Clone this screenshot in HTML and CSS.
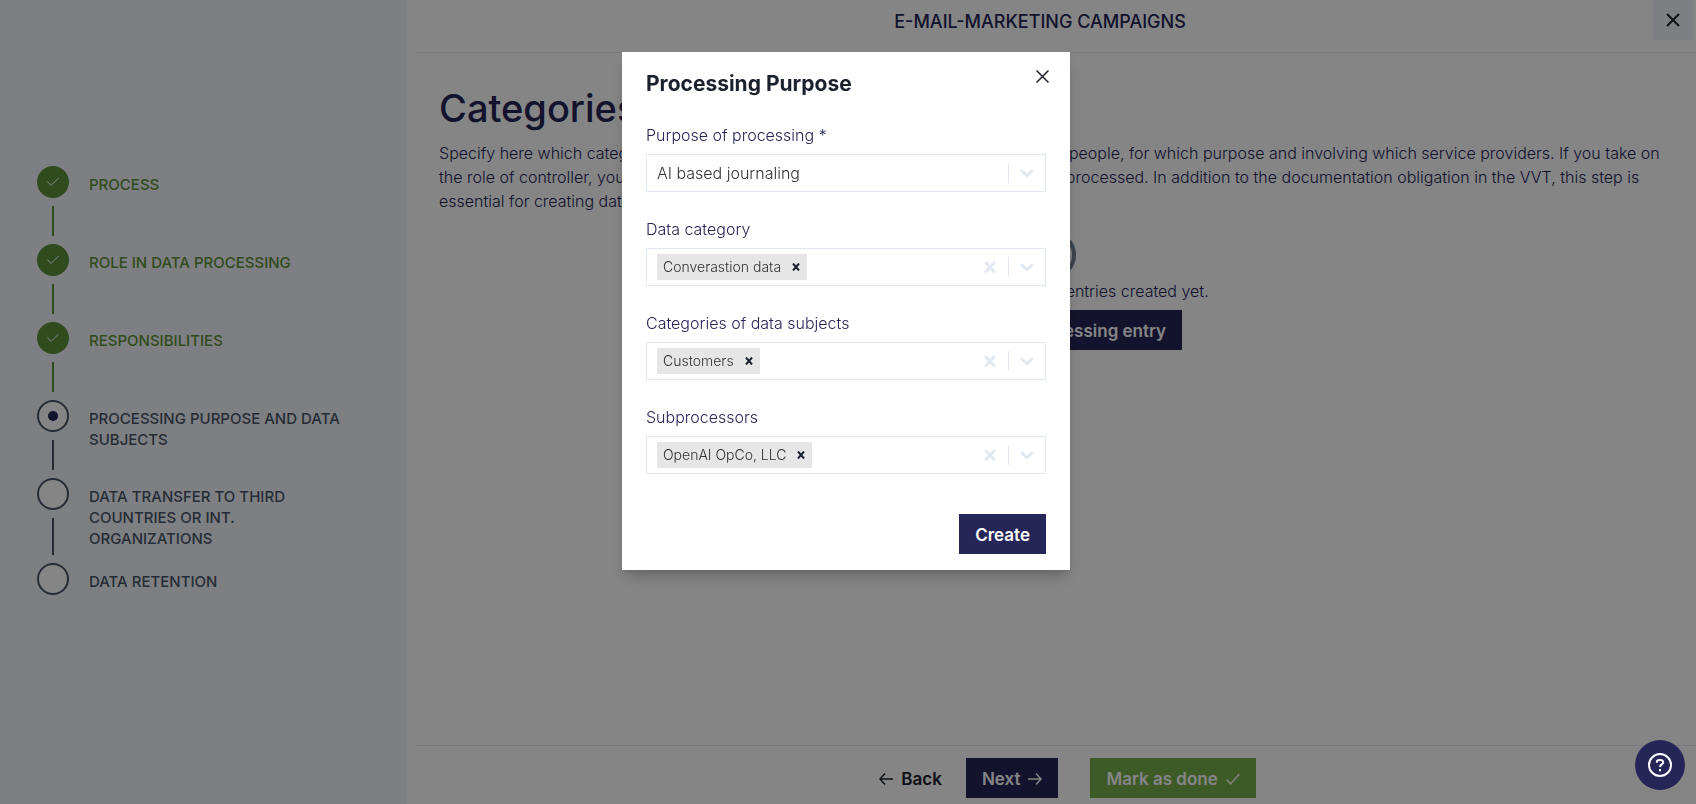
FILE: index.html
```html
<!DOCTYPE html>
<html lang="en">
<head>
<meta charset="utf-8">
<meta name="viewport" content="width=device-width, initial-scale=1">
<title>E-Mail-Marketing Campaigns</title>
<link rel="stylesheet" href="styles.css">
</head>
<body>
<div class="app">
  <aside class="sidebar">
    <ol class="steps">
      <li class="step done">
        <div class="rail"><span class="dot"><svg width="14" height="12" viewBox="0 0 14 12"><path d="M1.5 5.5 5 9.5 12.5 2"/></svg></span><span class="bar"></span></div>
        <span class="name">PROCESS</span>
      </li>
      <li class="step done">
        <div class="rail"><span class="dot"><svg width="14" height="12" viewBox="0 0 14 12"><path d="M1.5 5.5 5 9.5 12.5 2"/></svg></span><span class="bar"></span></div>
        <span class="name">ROLE IN DATA PROCESSING</span>
      </li>
      <li class="step done">
        <div class="rail"><span class="dot"><svg width="14" height="12" viewBox="0 0 14 12"><path d="M1.5 5.5 5 9.5 12.5 2"/></svg></span><span class="bar"></span></div>
        <span class="name">RESPONSIBILITIES</span>
      </li>
      <li class="step current">
        <div class="rail"><span class="dot"></span><span class="bar"></span></div>
        <span class="name">PROCESSING PURPOSE AND DATA SUBJECTS</span>
      </li>
      <li class="step">
        <div class="rail"><span class="dot"></span><span class="bar"></span></div>
        <span class="name">DATA TRANSFER TO THIRD COUNTRIES OR INT. ORGANIZATIONS</span>
      </li>
      <li class="step">
        <div class="rail"><span class="dot"></span></div>
        <span class="name">DATA RETENTION</span>
      </li>
    </ol>
  </aside>
  <main class="main">
    <header class="topbar">
      <h2 class="topbar-title">E-MAIL-MARKETING CAMPAIGNS</h2>
      <button class="close-page" type="button" aria-label="Close"><svg width="14" height="14" viewBox="0 0 14 14"><path d="M1 1 13 13M13 1 1 13"/></svg></button>
    </header>
    <section class="content">
      <h1>Categories</h1>
      <p class="intro">Specify here which categories of personal data are processed from which groups of people, for which purpose and involving which service providers. If you take on the role of controller, you also have to specify on which legal basis the data must be processed. In addition to the documentation obligation in the VVT, this step is essential for creating data protection declarations.</p>
      <div class="empty">
        <span class="ring"></span>
        <p>There are no recorded entries created yet.</p>
        <button class="btn primary" type="button">Create the processing entry</button>
      </div>
    </section>
    <footer class="actions">
      <button class="btn plain" type="button"><svg width="14" height="14" viewBox="0 0 14 14"><path d="M14 7H1M6 1.5 1 7l5 5.5"/></svg>Back</button>
      <button class="btn primary" type="button">Next<svg width="14" height="14" viewBox="0 0 14 14"><path d="M0 7H13M8 1.5 13 7l-5 5.5"/></svg></button>
      <button class="btn success" type="button">Mark as done<svg width="14" height="14" viewBox="0 0 14 14"><path d="M.5 7.5 4.5 12 13.5 2"/></svg></button>
    </footer>
  </main>
</div>

<div class="overlay">
  <form class="modal" role="dialog" aria-labelledby="modal-title">
    <div class="modal-head">
      <h2 id="modal-title">Processing Purpose</h2>
      <button class="close-modal" type="button" aria-label="Close dialog"><svg width="13" height="13" viewBox="0 0 13 13"><path d="M.5.5l12 12M12.5.5l-12 12"/></svg></button>
    </div>
    <div class="field">
      <label for="purpose">Purpose of processing *</label>
      <div class="control">
        <select id="purpose"><option>AI based journaling</option></select>
        <span class="sep"></span>
        <span class="ind"><svg width="20" height="20" viewBox="0 0 20 20"><path d="M5 8l5 4.700L15 8"/></svg></span>
      </div>
    </div>
    <div class="field">
      <label for="category">Data category</label>
      <div class="control">
        <span class="tag">Converastion data<button type="button" aria-label="Remove Converastion data"><svg width="8" height="8" viewBox="0 0 8 8"><path d="M1 .5l6 7M7 .5l-6 7"/></svg></button></span>
        <input id="category" type="text">
        <button class="ind" type="button" aria-label="Clear"><svg width="20" height="20" viewBox="0 0 20 20"><path d="M6 6l8 8.500M14 6l-8 8.500"/></svg></button>
        <span class="sep"></span>
        <button class="ind" type="button" aria-label="Open"><svg width="20" height="20" viewBox="0 0 20 20"><path d="M5 8l5 4.700L15 8"/></svg></button>
      </div>
    </div>
    <div class="field">
      <label for="subjects">Categories of data subjects</label>
      <div class="control">
        <span class="tag">Customers<button type="button" aria-label="Remove Customers"><svg width="8" height="8" viewBox="0 0 8 8"><path d="M1 .5l6 7M7 .5l-6 7"/></svg></button></span>
        <input id="subjects" type="text">
        <button class="ind" type="button" aria-label="Clear"><svg width="20" height="20" viewBox="0 0 20 20"><path d="M6 6l8 8.500M14 6l-8 8.500"/></svg></button>
        <span class="sep"></span>
        <button class="ind" type="button" aria-label="Open"><svg width="20" height="20" viewBox="0 0 20 20"><path d="M5 8l5 4.700L15 8"/></svg></button>
      </div>
    </div>
    <div class="field">
      <label for="subprocessors">Subprocessors</label>
      <div class="control">
        <span class="tag">OpenAI OpCo, LLC<button type="button" aria-label="Remove OpenAI OpCo, LLC"><svg width="8" height="8" viewBox="0 0 8 8"><path d="M1 .5l6 7M7 .5l-6 7"/></svg></button></span>
        <input id="subprocessors" type="text">
        <button class="ind" type="button" aria-label="Clear"><svg width="20" height="20" viewBox="0 0 20 20"><path d="M6 6l8 8.500M14 6l-8 8.500"/></svg></button>
        <span class="sep"></span>
        <button class="ind" type="button" aria-label="Open"><svg width="20" height="20" viewBox="0 0 20 20"><path d="M5 8l5 4.700L15 8"/></svg></button>
      </div>
    </div>
    <div class="modal-foot"><button class="btn primary" type="submit">Create</button></div>
  </form>
</div>

<button class="help" type="button" aria-label="Help"><svg width="24" height="24" viewBox="0 0 24 24"><circle cx="12" cy="12" r="11"/><path d="M8.800 9.800V9.200C8.800 7.600 10 6.900 12 6.900s3.200.9 3.200 2.400c0 2.200-3.200 1.900-3.200 4.700M12 16v2.200"/></svg></button>
</body>
</html>
```
FILE: styles.css
```css
* { box-sizing: border-box; }

body {
  margin: 0;
  font-family: Inter, "Liberation Sans", sans-serif;
  font-size: 16px;
  line-height: 24px;
  font-weight: 300;
  color: #262557;
  background: #fff;
}

h1, h2, p, ol { margin: 0; padding: 0; }
button, input, select { font: inherit; color: inherit; margin: 0; padding: 0; border: 0; background: none; }
button { cursor: pointer; }
svg { display: block; fill: none; stroke: currentColor; flex: none; }

.app { display: flex; gap: 8px; min-height: 100vh; }

.sidebar {
  flex: 0 0 24%;
  display: flex;
  align-items: center;
  padding: 2px 48px 0 37px;
  background: #f2f4fa;
}
.steps { list-style: none; width: 100%; }
.step { display: flex; gap: 20px; min-height: 78px; color: #4a5568; }
.step.done { color: #5d9138; }
.rail { flex: none; display: flex; flex-direction: column; align-items: center; gap: 8px; padding-bottom: 8px; }
.dot {
  width: 32px; height: 32px;
  display: grid; place-items: center;
  border: 2px solid currentColor; border-radius: 50%;
  background: #fff;
}
.done .dot { background: currentColor; }
.done .dot svg { stroke: #fff; }
.current .dot::after { content: ""; width: 10px; height: 10px; border-radius: 50%; background: #262557; }
.bar { flex: 1; width: 2px; background: currentColor; }
.name { padding: 8px 0 14px; font-size: 15px; line-height: 21px; font-weight: 500; }

.main { flex: 1; min-width: 0; display: flex; flex-direction: column; }
.topbar {
  display: flex; align-items: flex-start;
  height: 53px; padding: 0 3px 0 12px;
  border-bottom: 1px solid #e2e8f0;
}
.topbar-title { flex: 1; text-align: center; font-size: 18px; line-height: 44px; font-weight: 500; }
.close-page { width: 40px; height: 40px; display: grid; place-items: center; background: #f2f4fa; color: #1a202c; }
.close-page svg { stroke-width: 2; }

.content { flex: 1; padding: 30px 32px 0 24px; }
h1 { font-size: 38px; line-height: 50px; font-weight: 500; margin-bottom: 8px; }
.empty { display: flex; flex-direction: column; align-items: center; padding-top: 18px; }
.ring { width: 48px; height: 48px; border: 4px solid #718096; border-radius: 50%; }
.empty .btn { margin-top: 7px; }

.actions {
  display: flex; justify-content: center; gap: 8px;
  padding: 12px 0 6px 8px;
  border-top: 1px solid #e2e8f0;
}
.actions .success { margin-left: 24px; }
.btn {
  display: inline-flex; align-items: center; gap: 8px;
  height: 40px; padding: 1px 16px 0;
  font-size: 17px; font-weight: 600;
}
.btn svg { stroke-width: 1.5; }
.primary { background: #262557; color: #fff; }
.success { background: #75ae4b; color: #fff; }
.plain { color: #1a202c; }

.overlay {
  position: fixed; inset: 0;
  display: flex; justify-content: center; align-items: flex-start;
  padding: 52px 4px 0 0;
  background: rgba(0, 0, 0, 0.48);
}
.modal {
  width: 448px; max-width: 100%;
  padding: 17px 24px 16px;
  background: #fff;
  box-shadow: 0 10px 15px -3px rgba(0, 0, 0, 0.2), 0 4px 6px -2px rgba(0, 0, 0, 0.1);
}
.modal-head { display: flex; justify-content: space-between; align-items: flex-start; margin-bottom: 24px; color: #1a202c; }
.modal-head h2 { font-size: 21px; line-height: 30px; font-weight: 700; }
.close-modal { width: 32px; height: 14px; margin-right: -12px; display: grid; place-items: center; }
.close-modal svg { stroke-width: 1.5; }
.field { margin-bottom: 25px; }
.field label { display: block; margin-bottom: 7px; }
.control { display: flex; align-items: center; height: 38px; padding-left: 10px; border: 1px solid #e2e8f0; color: #333; }
.control select { flex: 1; min-width: 0; appearance: none; outline: 0; }
.control input { flex: 1; min-width: 0; outline: 0; }
.sep { width: 1px; height: 20px; background: #e2e8f0; }
.ind { width: 36px; height: 36px; display: grid; place-items: center; color: #e2e8f0; }
.ind svg { stroke-width: 3; stroke-linecap: round; stroke-linejoin: round; }
.tag { display: flex; align-items: center; gap: 4px; height: 26px; padding-left: 6px; font-size: 14px; background: #e6e6e6; }
.tag button { width: 22px; height: 26px; display: grid; place-items: center; color: #1a202c; }
.tag svg { stroke-width: 2; }
.modal-foot { display: flex; justify-content: flex-end; padding-top: 15px; }

.help {
  position: fixed; right: 11px; bottom: 14px;
  width: 50px; height: 50px;
  display: grid; place-items: center;
  border-radius: 50%;
  background: #262557; color: #fff;
}
.help svg { stroke-width: 2; }
```
